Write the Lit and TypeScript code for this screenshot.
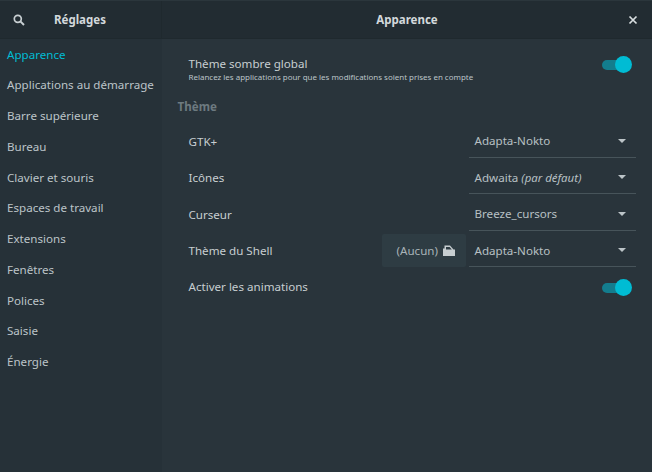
import { LitElement, html, css, svg } from "lit";
import { customElement } from "lit/decorators.js";

const ITEMS = ["Apparence","Applications au démarrage","Barre supérieure","Bureau","Clavier et souris","Espaces de travail","Extensions","Fenêtres","Polices","Saisie","Énergie"];

@customElement("app-root")
export class AppRoot extends LitElement {
  static styles = css`
    :host { display:flex; flex-direction:column; width:652px; height:472px; overflow:hidden; background:#29343b; color:#c7ced1; font-family:"Noto Sans",sans-serif; font-size:11.6px; }
    .head { display:flex; flex:none; background:#222c32; border-bottom:1px solid #1f292e; border-top:1px solid #2b363c; box-sizing:content-box; height:37px; font-weight:700; font-size:11.5px; color:#d3d9dc; }
    .hl { width:162px; flex:none; display:flex; align-items:center; border-right:1px solid #1f292e; box-sizing:border-box; }
    .search { width:14px; height:14px; margin-left:12px; }
    .hl span { margin-left:28px; }
    .hr { flex:1; display:flex; align-items:center; justify-content:center; position:relative; }
    .close { position:absolute; right:13px; top:13px; width:12px; height:12px; }
    .body { flex:1; display:flex; min-height:0; }
    .side { width:162px; flex:none; background:#263138; box-sizing:border-box; margin-top:-0.3px; }
    .item { height:30.75px; padding-left:7px; display:flex; align-items:center; color:#bcc4c8; white-space:nowrap; }
    .item.on { color:#00bcd4; }
    .main { flex:1; padding-left:15.5px; padding-right:16px; min-width:0; }
    .row { display:flex; align-items:center; padding-left:11px; }
    .row1 { height:36px; margin-top:12.5px; }
    .row1 .sw { margin-bottom:9px; }
    .lbl { flex:1; }
    .r .lbl { padding-top:3.4px; }
    .r:last-child .lbl { padding-top:2.6px; }
    .sub { font-size:7.95px; color:#bcc4c8; line-height:11px; margin-top:1px; }
    .sec { font-weight:700; color:#6d7a80; height:20px; margin-top:9.5px; line-height:20px; }
    .sw { position:relative; width:30px; height:18px; margin-right:4px; flex:none; }
    .r .sw { margin-top:4.5px; }
    .sw i { position:absolute; left:0; top:4px; width:22px; height:10px; border-radius:5px; background:#137d8e; }
    .sw b { position:absolute; right:0; top:0; width:17px; height:17px; border-radius:50%; background:#00bcd4; }
    .drows { margin-top:4.3px; }
    .r { height:36.5px; }
    .btn { width:84px; height:33px; align-self:flex-end; box-sizing:border-box; background:#2e3c43; border-radius:2px; display:flex; align-items:center; justify-content:flex-end; gap:5px; padding-right:11px; color:#a9b3b8; margin-right:3px; }
    .dd { width:167px; height:36.5px; box-sizing:border-box; border-bottom:1px solid #47545a; display:flex; align-items:center; padding:3.4px 10px 0 5.5px; color:#b8c0c4; flex:none; }
    .dd span { flex:1; }
    .dd em { font-style:italic; font-size:11.4px; }
    .arr { width:0; height:0; border-left:4px solid transparent; border-right:4px solid transparent; border-top:4px solid #bcc4c8; }
  `;
  render() {
    const sw = html`<div class="sw"><i></i><b></b></div>`;
    return html`
      <div class="head">
        <div class="hl">
          <svg class="search" viewBox="0 0 14 14" fill="none" stroke="#c9d0d3" stroke-width="1.7"><circle cx="5.8" cy="5.8" r="3.5"/><path d="M8.4 8.4l3.6 3.6" stroke-width="2"/></svg>
          <span>Réglages</span>
        </div>
        <div class="hr"><span>Apparence</span>
          <svg class="close" viewBox="0 0 12 12" stroke="#d8dee0" stroke-width="1.7" fill="none"><path d="M2.5 2.5l7 7M9.5 2.5l-7 7"/></svg>
        </div>
      </div>
      <div class="body">
        <nav class="side">${ITEMS.map((t,i)=>html`<div class="item ${i===0?"on":""}">${t}</div>`)}</nav>
        <div class="main">
          <div class="row row1">
            <div class="lbl"><div>Thème sombre global</div><div class="sub">Relancez les applications pour que les modifications soient prises en compte</div></div>
            ${sw}
          </div>
          <div class="sec">Thème</div>
          <div class="drows">
            <div class="row r"><div class="lbl">GTK+</div><div class="dd"><span>Adapta-Nokto</span><div class="arr"></div></div></div>
            <div class="row r"><div class="lbl">Icônes</div><div class="dd"><span>Adwaita <em>(par défaut)</em></span><div class="arr"></div></div></div>
            <div class="row r"><div class="lbl">Curseur</div><div class="dd"><span>Breeze_cursors</span><div class="arr"></div></div></div>
            <div class="row r"><div class="lbl">Thème du Shell</div>
              <div class="btn">(Aucun)
                <svg width="12" height="11" viewBox="0 0 12 11" fill="#c7ced1">${svg`<path fill-rule="evenodd" d="M0 11V3.5h1.5V0.5h5.5l3.5 4H12V11zM3 2v2.5h5.8L6.6 2z"/>`}</svg>
              </div>
              <div class="dd"><span>Adapta-Nokto</span><div class="arr"></div></div></div>
            <div class="row r"><div class="lbl">Activer les animations</div>${sw}</div>
          </div>
        </div>
      </div>`;
  }
}
